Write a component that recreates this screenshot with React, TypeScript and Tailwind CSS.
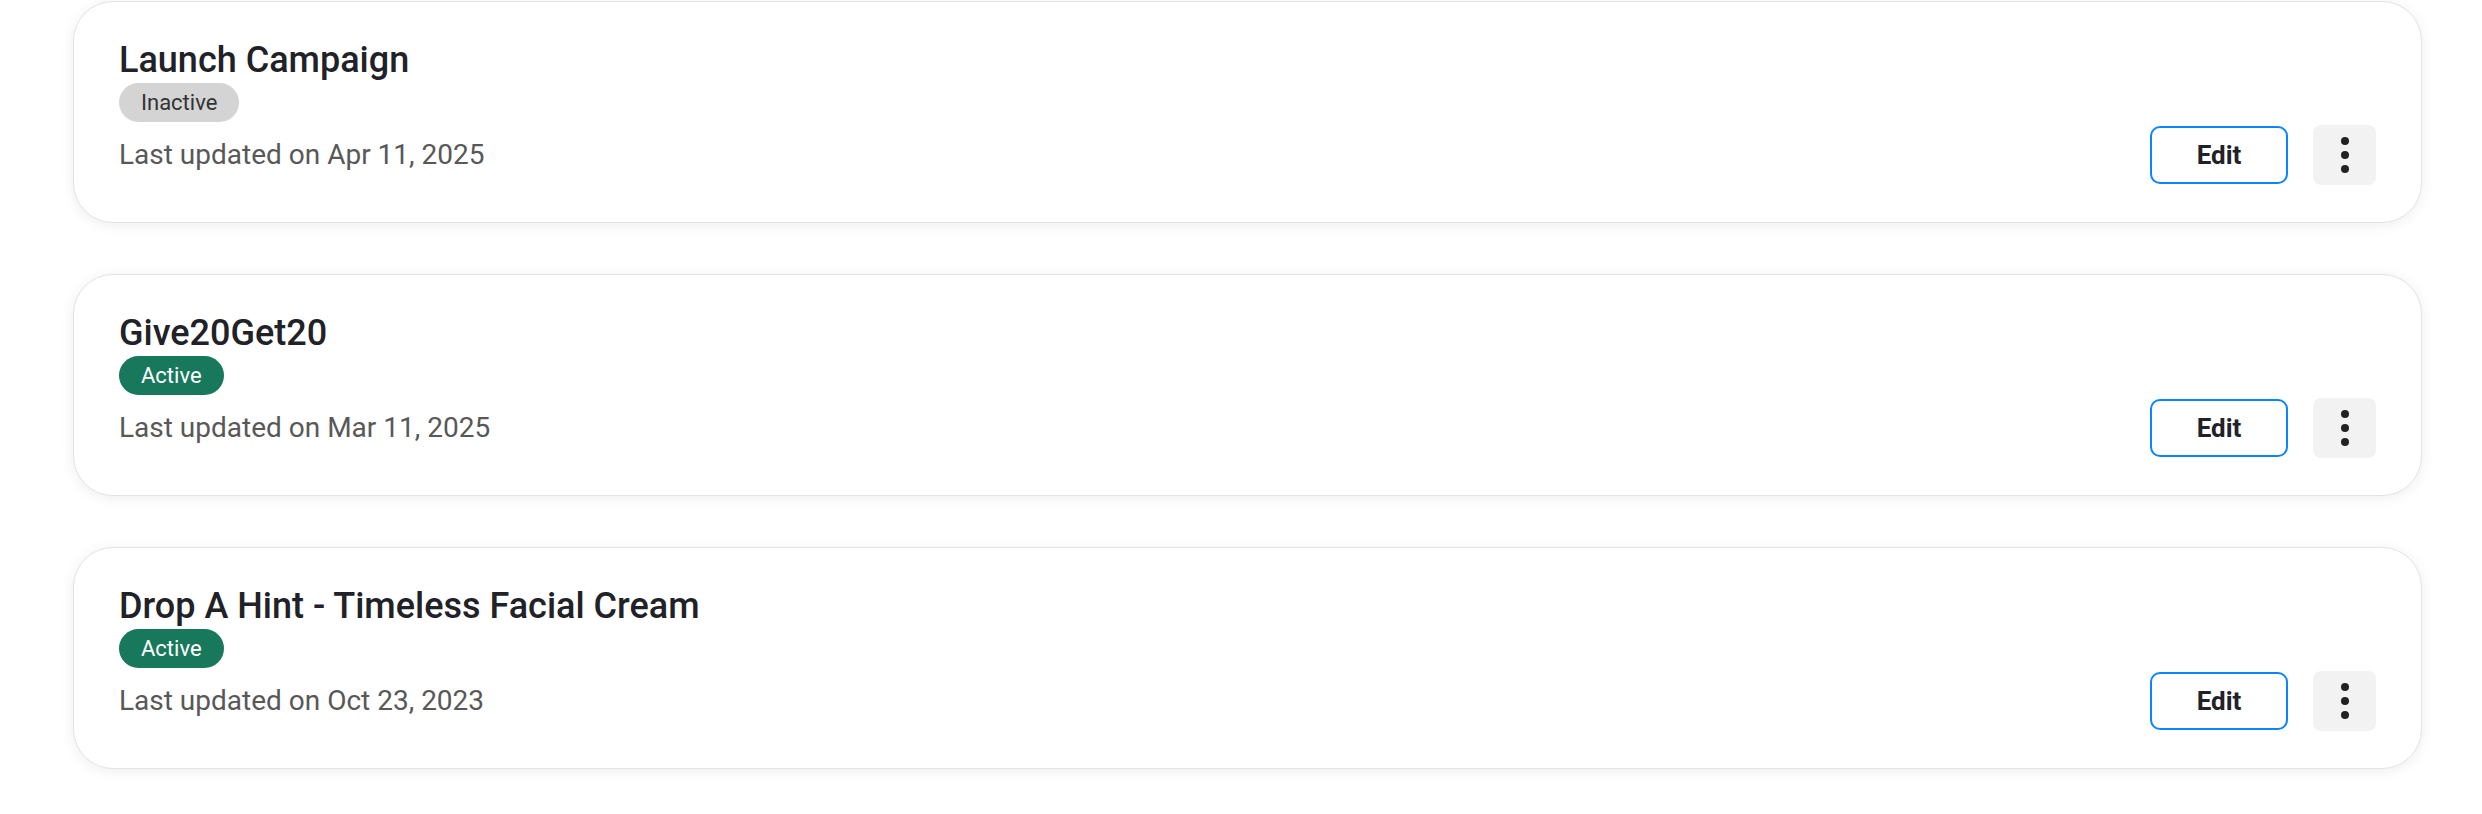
const campaigns = [
  { name: 'Launch Campaign', active: false, updated: 'Apr 11, 2025' },
  { name: 'Give20Get20', active: true, updated: 'Mar 11, 2025' },
  { name: 'Drop A Hint - Timeless Facial Cream', active: true, updated: 'Oct 23, 2023' },
];

function StatusBadge({ active }: { active: boolean }) {
  return active ? (
    <span className="inline-block h-[39px] leading-[39px] px-[22px] rounded-full bg-[#17785b] text-white text-[22px]">
      Active
    </span>
  ) : (
    <span className="inline-block h-[39px] leading-[39px] px-[22px] rounded-full bg-[#d4d4d4] text-[#333] text-[22px]">
      Inactive
    </span>
  );
}

function CampaignCard({ name, active, updated }: (typeof campaigns)[number]) {
  return (
    <article className="bg-white border border-[#e3e3e3] rounded-[40px] shadow-[0_2px_14px_rgba(0,0,0,0.07)] pt-[37px] pb-[37px] px-[45px]">
      <h2 className="text-[36px] leading-[43px] font-medium text-[#212227]">{name}</h2>
      <div className="mt-px">
        <StatusBadge active={active} />
      </div>
      <div className="mt-[3px] h-[60px] flex items-center justify-between">
        <p className="text-[28px] leading-[40px] text-[#585858]">Last updated on {updated}</p>
        <div className="flex items-center gap-[25px]">
          <button className="w-[138px] h-[58px] rounded-[10px] border-2 border-[#0a84ff] bg-white text-[26px] font-bold text-[#212227]">
            Edit
          </button>
          <button className="w-[63px] h-[60px] rounded-[8px] bg-[#f2f2f2] flex flex-col items-center justify-center gap-[6px]">
            <span className="w-[8px] h-[8px] rounded-full bg-[#222]" />
            <span className="w-[8px] h-[8px] rounded-full bg-[#222]" />
            <span className="w-[8px] h-[8px] rounded-full bg-[#222]" />
          </button>
        </div>
      </div>
    </article>
  );
}

export default function App() {
  return (
    <main className="w-full h-[814px] overflow-hidden bg-white font-['Roboto',sans-serif]">
      <section className="pl-[73px] pr-[60px] pt-[1px] flex flex-col gap-[51px]">
        {campaigns.map((c) => (
          <CampaignCard key={c.name} {...c} />
        ))}
      </section>
    </main>
  );
}
